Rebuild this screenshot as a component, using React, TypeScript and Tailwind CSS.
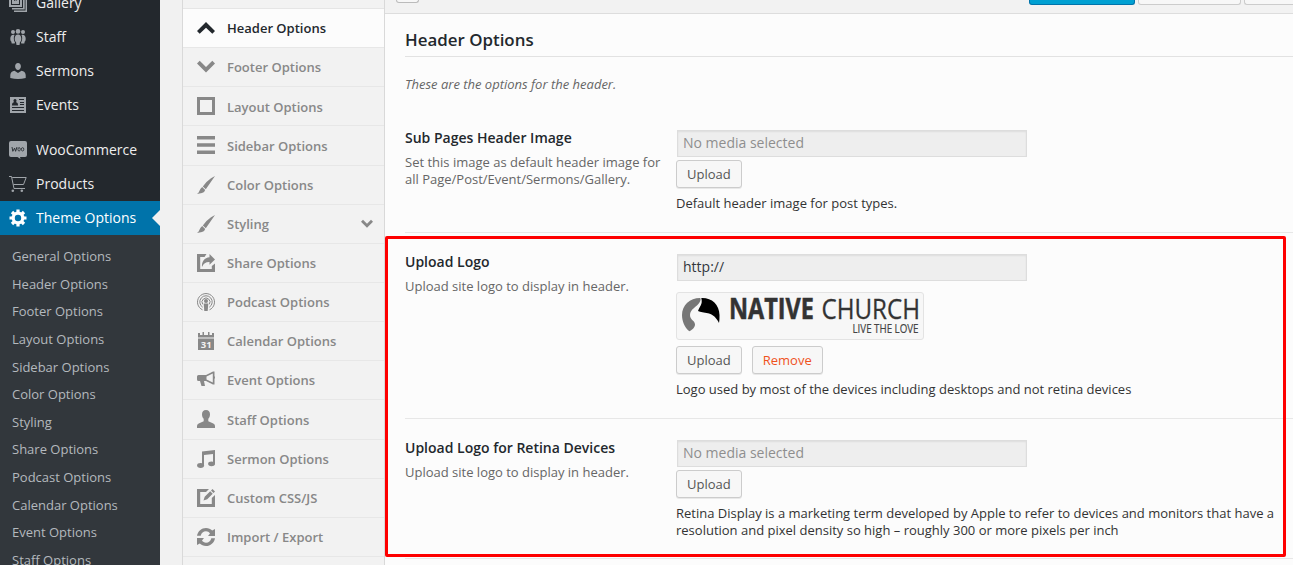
import type { ReactNode } from 'react';

const Icon = ({ children, className = 'size-[18px]' }: { children: ReactNode; className?: string }) => (
  <svg viewBox="0 0 18 18" fill="currentColor" className={`shrink-0 ${className}`}>
    {children}
  </svg>
);

const brush = <path d="M18 0 8.800 13.200 5.800 10.400Q10 5 14 2.300zM5.200 11 8.200 13.900Q7.500 16.200 5 17L0 18Q2 16.500 2.600 14.500T5.200 11z" />;

const adminIcons: Record<string, ReactNode> = {
  Gallery: (
    <path
      fillRule="evenodd"
      d="M0 0h13v13H0zM2 2v9h9V2zM3 3h7v7H3zM5 4v3l2-1 1 1V4zM14 2h1.700v13.600H3V14h11zM16.500 5H18v13H5v-1.400h11.500z"
    />
  ),
  Staff: (
    <>
      <circle cx="4" cy="4" r="2" />
      <circle cx="9" cy="3.400" r="2.300" />
      <circle cx="14" cy="4" r="2" />
      <path d="M9 6.500c2 0 3.300 1.500 3.300 4.200 0 2-.7 3-1.300 3.300L10.500 17h-3L7 14c-.6-.3-1.300-1.300-1.300-3.300C5.700 8 7 6.500 9 6.500zM4.800 6.700C3 6.400 1.300 7.600 1.300 10.500c0 2 .5 2.700 1 3l.4 2h3L6 14.600C4.500 12.600 4.500 9 5.500 7zM13.200 6.700c1.800-.3 3.500.9 3.500 3.800 0 2-.5 2.700-1 3l-.4 2h-3l-.3-.9c1.500-2 1.500-5.600.5-7.600z" />
    </>
  ),
  Sermons: (
    <path d="M9 1c1.800 0 2.900 1.300 2.900 3.200S10.700 8 9 8 6.100 6.100 6.100 4.200 7.200 1 9 1zM5.500 8.700 9 11l3.500-2.300c2.300.2 4.200 2 4.200 4.300V16q-7.700 2-15.400 0v-3c0-2.300 1.900-4.100 4.200-4.300z" />
  ),
  Events: (
    <path
      fillRule="evenodd"
      d="M1 1h16v16H1zM10 3v1h5V3zM11 6v1h4V6zM11 8v1h4V8zM3 11v1h12v-1zM3 14v1h12v-1zM6 3C4.800 3 4.300 4 4.500 5L5 6.200C3.500 6.500 3 7.200 3 9.500h6C9 7.200 8.500 6.500 7 6.200L7.500 5C7.700 4 7.200 3 6 3z"
    />
  ),
  WooCommerce: (
    <>
      <path d="M2 0h14q2 0 2 2v12q0 2-2 2h-5l.5 2-3-2H2q-2 0-2-2V2q0-2 2-2z" />
      <path d="m3 6 .8 4.300L5.600 7.100l1 3.200L8 6" fill="none" stroke="#23282d" strokeWidth="0.9" />
      <ellipse cx="10.100" cy="8.300" rx="1.200" ry="1.700" fill="none" stroke="#23282d" strokeWidth="0.8" />
      <ellipse cx="13.600" cy="8.300" rx="1.200" ry="1.700" fill="none" stroke="#23282d" strokeWidth="0.8" />
    </>
  ),
  Products: (
    <>
      <path d="M0 1.500h2.500L5 13.500h11M3.200 2.500h14L14.500 9.500H4.500" fill="none" stroke="currentColor" strokeWidth="1" />
      <circle cx="3.800" cy="15.800" r="1.300" />
      <circle cx="12.800" cy="15.800" r="1.300" />
    </>
  ),
  'Theme Options': (
    <>
      <circle cx="9" cy="9" r="4.800" fill="none" stroke="currentColor" strokeWidth="3.200" />
      <path
        d="M9 .5v3M9 14.500v3M.5 9h3M14.500 9h3M3 3l2 2M13 13l2 2M15 3l-2 2M5 13l-2 2"
        fill="none"
        stroke="currentColor"
        strokeWidth="3.200"
      />
    </>
  ),
};

const tabs: { label: string; icon: ReactNode; expandable?: boolean }[] = [
  { label: 'Header Options', icon: <path d="m0 12 9-9 9 9-2.700 2.700L9 8.700l-6.300 6z" /> },
  { label: 'Footer Options', icon: <path d="m0 5.500 2.700-2.700L9 8.900l6.300-6.100L18 5.500l-9 9z" /> },
  { label: 'Layout Options', icon: <path fillRule="evenodd" d="M0 0h18v18H0zM3 3v12h12V3z" /> },
  { label: 'Sidebar Options', icon: <path d="M0 0h18v3.500H0zM0 7.300h18v3.500H0zM0 14.500h18V18H0z" /> },
  { label: 'Color Options', icon: brush },
  { label: 'Styling', icon: brush, expandable: true },
  {
    label: 'Share Options',
    icon: (
      <path d="M0 0h9.500L7.500 3H3.200v12h11.600v-3l3.200-2.500V18H0zM12.500 0 18 5.500l-5.500 5.300V8C9 7.800 6.500 9.500 5 13 4.500 7.500 7.500 3.700 12.500 3.200z" />
    ),
  },
  {
    label: 'Podcast Options',
    icon: (
      <>
        <g fill="none" stroke="currentColor" strokeWidth="1">
          <path d="M5.500 16.800a8.500 8.500 0 1 1 7 0" />
          <path d="M5.700 14.200a6.200 6.200 0 1 1 6.600 0" />
          <path d="M5.700 11.300a4 4 0 1 1 6.600 0" />
        </g>
        <circle cx="9" cy="8" r="2" />
        <path d="M6.700 10.500h4.600L10.700 18H7.300z" />
      </>
    ),
  },
  {
    label: 'Calendar Options',
    icon: (
      <>
        <path d="M1 1h2v2h2.500V0H7v3h4V0h1.500v3H15V1h2v4.500H1zM1 6.500h16V18H1z" />
        <text x="9.200" y="15.900" textAnchor="middle" fill="#f2f2f2" className="font-['Open_Sans',sans-serif] text-[9.500px] font-bold">
          31
        </text>
      </>
    ),
  },
  {
    label: 'Event Options',
    icon: (
      <path
        fillRule="evenodd"
        d="M16 0.500h1.500v4.500q1 1.500 0 3V13.500H16l-7-3.500H7L8 15H4.500L3 10H1.500Q0 10 0 8.500V5.500q0-1.500 1.500-1.500H9zM15.800 2.500 9.500 5.500v3l6.300 3z"
      />
    ),
  },
  {
    label: 'Staff Options',
    icon: (
      <path d="M9 0c2.700 0 4 1.700 4 4.200 0 2-.7 3.600-1.700 4.600v2.400l5 2.200Q18 14.200 18 16v2H0v-2q0-1.800 1.700-2.600l5-2.200V8.800C5.700 7.800 5 6.200 5 4.200 5 1.700 6.300 0 9 0z" />
    ),
  },
  {
    label: 'Sermon Options',
    icon: (
      <>
        <path d="M5 1.500 18 0v14h-2V4L7 5v10.500H5z" />
        <ellipse cx="3.600" cy="15.500" rx="3.500" ry="2.400" />
        <ellipse cx="14.600" cy="13.800" rx="3.500" ry="2.400" />
      </>
    ),
  },
  {
    label: 'Custom CSS/JS',
    icon: <path d="M0 0h12l-3 3H3.200v12h11.600V9L18 6v12H0zM15.500 0 18 2.500 16.500 4 14 1.500zM13.200 2.300l2.500 2.500-5.500 5.500L6.500 11.500l1.200-3.700z" />,
  },
  {
    label: 'Import / Export',
    icon: (
      <path d="M0 7.800C.8 3.200 4.500 0 9 0c2.600 0 4.600.9 6.200 2.500L18 1v7h-7l2-2.500C12 4.200 10.700 3.300 9 3.300c-2.700 0-4.600 1.700-5.300 4.500zM18 10.200C17.200 14.800 13.500 18 9 18c-2.600 0-4.600-.9-6.200-2.500L0 17v-7h7l-2 2.500c1 1.300 2.300 2.200 4 2.200 2.700 0 4.600-1.700 5.300-4.500z" />
    ),
  },
];

const subItems = ['General Options', ...tabs.slice(0, 11).map((t) => t.label)];

const AdminItem = ({ label, active }: { label: string; active?: boolean }) => (
  <a
    className={`relative flex h-[34px] shrink-0 items-center pl-[9px] text-sm ${active ? 'bg-[#0073aa] text-white' : 'text-[#eee]'}`}
  >
    <Icon className={`size-[18px] ${active ? 'text-white' : 'text-[#a0a5aa]'}`}>{adminIcons[label]}</Icon>
    <span className="ml-[9px]">{label}</span>
    {active && <span className="absolute top-[9px] right-0 border-y-8 border-r-8 border-y-transparent border-r-[#f1f1f1]" />}
  </a>
);

const Button = ({ label, danger }: { label: string; danger?: boolean }) => (
  <button
    className={`h-7 rounded-[3px] border border-[#ccc] bg-[#f7f7f7] px-[10px] text-[13px] leading-[26px] shadow-[0_1px_0_rgba(0,0,0,0.08)] ${danger ? 'text-[#ef521d]' : 'text-[#555]'}`}
  >
    {label}
  </button>
);

const Logo = () => (
  <div className="mt-[11px] mb-1.5 h-12 w-[248px] rounded-[3px] border border-[#e3e3e3] bg-[#f7f7f7]">
    <svg viewBox="0 0 246 46" className="h-[46px] w-[246px] font-['Open_Sans',sans-serif]">
      <path
        d="M23 5C13 5 5 12 5 22c0 6 2.500 12.500 7.300 16.200 3-1.200 5.700-4 5.700-6.700 0-4-5-4.500-5-9.500 0-6 7-8 9.500-12.500 1.300-2.300 1.500-4 .5-4.500z"
        fill="#777"
      />
      <path
        d="M24.300 5c10-.5 18 6 18.200 17 0 3.500 0 5-.5 8-2.500-5.500-6-8.500-11-9.800-4-1-7.500-.7-10-2.200 1.500-4.500 5-6.500 3.300-13z"
        fill="#000"
      />
      <text
        x="52"
        y="26"
        textLength="85"
        lengthAdjust="spacingAndGlyphs"
        fill="#333"
        stroke="#333"
        strokeWidth="0.5"
        className="text-[28px] font-bold"
      >
        NATIVE
      </text>
      <text
        x="144.500"
        y="26"
        textLength="98.500"
        lengthAdjust="spacingAndGlyphs"
        fill="#333"
        stroke="#333"
        strokeWidth="0.3"
        className="text-[28px] font-normal"
      >
        CHURCH
      </text>
      <text
        x="175.500"
        y="40"
        textLength="66"
        lengthAdjust="spacingAndGlyphs"
        fill="#444"
        stroke="#444"
        strokeWidth="0.2"
        className="text-[12px]"
      >
        LIVE THE LOVE
      </text>
    </svg>
  </div>
);

const Field = ({
  title,
  description,
  value,
  placeholder,
  className,
  children,
}: {
  title: string;
  description: string;
  value?: string;
  placeholder?: string;
  className: string;
  children: ReactNode;
}) => (
  <section className={`flex shrink-0 border-b border-[#e7e7e7] pt-[21px] ${className}`}>
    <div className="w-[271px] shrink-0 pr-3">
      <h4 className="text-sm leading-4 font-semibold text-[#23282d]">{title}</h4>
      <p className="mt-2 text-[13px] leading-[17px] text-[#666]">{description}</p>
    </div>
    <div className="flex min-w-0 grow flex-col items-start pr-3 text-[13px] leading-[17px] text-[#333]">
      <input
        readOnly
        value={value}
        placeholder={placeholder}
        className="ml-px h-[27px] w-[350px] shrink-0 border border-[#ddd] bg-[#eee] px-[5px] pb-[2px] text-sm text-[#32373c] shadow-[inset_0_1px_2px_rgba(0,0,0,0.07)] placeholder:text-[#8e8e8e]"
      />
      {children}
    </div>
  </section>
);

export default function App() {
  return (
    <div className="flex h-[565px] w-full overflow-hidden bg-[#f1f1f1] font-['Open_Sans',sans-serif]">
      <nav className="flex w-40 shrink-0 flex-col overflow-hidden bg-[#23282d]">
        <div className="-mt-[14px] flex flex-col">
          {['Gallery', 'Staff', 'Sermons', 'Events'].map((l) => (
            <AdminItem key={l} label={l} />
          ))}
        </div>
        <div className="mt-[11px] flex flex-col">
          <AdminItem label="WooCommerce" />
          <AdminItem label="Products" />
          <AdminItem label="Theme Options" active />
        </div>
        <ul className="h-[400px] shrink-0 bg-[#32373c] pt-[8.200px] pl-3 text-[13px] text-[#b4b9be]">
          {subItems.map((l) => (
            <li key={l} className="h-[27.6px] leading-[27.6px]">
              {l}
            </li>
          ))}
        </ul>
      </nav>

      <aside className="ml-[22px] flex w-[203px] shrink-0 flex-col border-x border-[#d9d9d9] bg-[#f2f2f2] pt-2">
        <ul className="border-t border-[#e5e5e5]">
          {tabs.map((t, i) => (
            <li
              key={t.label}
              className={`flex h-[39.150px] items-center border-b border-[#e7e7e7] text-[13px] font-semibold ${i === 0 ? 'bg-[#fcfcfc] text-[#23282d]' : 'text-[#888]'}`}
            >
              <Icon className="ml-[14px] size-[18px]">{t.icon}</Icon>
              <span className="ml-3 pt-[1.800px]">{t.label}</span>
              {t.expandable && (
                <Icon className="mr-[11px] ml-auto size-3">
                  <path d="m0 5.500 3-3L9 8.500l6-6 3 3-9 9z" />
                </Icon>
              )}
            </li>
          ))}
        </ul>
      </aside>

      <main className="relative flex min-w-0 grow flex-col bg-[#fcfcfc]">
        <div className="flex h-[14px] shrink-0 items-start border-b border-[#ddd] bg-[#f2f2f2] pl-[11px]">
          <div className="h-[3px] w-[23px] rounded-b-[3px] border border-t-0 border-[#bbb] bg-[#f7f7f7]" />
          <div className="ml-auto flex gap-[3px]">
            <div className="h-[5px] w-[106px] rounded-b-[3px] border border-t-0 border-[#0073aa] bg-[#00a0d2]" />
            <div className="h-[5px] w-[103px] rounded-b-[3px] border border-t-0 border-[#ccc] bg-[#f7f7f7]" />
            <div className="h-[5px] w-[49px] rounded-bl-[3px] border-b border-l border-[#ccc] bg-[#f7f7f7]" />
          </div>
        </div>
        <div className="flex flex-col pl-5">
          <h3 className="h-[43px] border-b border-[#e2e2e2] pt-[14px] text-[16.900px] leading-6 font-semibold text-[#23282d]">
            Header Options
          </h3>
          <p className="mt-[17px] h-[35px] text-[13px] leading-5 text-[#666] italic">These are the options for the header.</p>
          <Field
            title="Sub Pages Header Image"
            description="Set this image as default header image for all Page/Post/Event/Sermons/Gallery."
            placeholder="No media selected"
            className="h-[124px]"
          >
            <div className="mt-[3px] flex">
              <Button label="Upload" />
            </div>
            <p className="mt-[7px]">Default header image for post types.</p>
          </Field>
          <Field title="Upload Logo" description="Upload site logo to display in header." value="http://" className="h-[186px]">
            <Logo />
            <div className="flex gap-[10px]">
              <Button label="Upload" />
              <Button label="Remove" danger />
            </div>
            <p className="mt-[7px]">Logo used by most of the devices including desktops and not retina devices</p>
          </Field>
          <Field
            title="Upload Logo for Retina Devices"
            description="Upload site logo to display in header."
            placeholder="No media selected"
            className="h-[140px]"
          >
            <div className="mt-[3px] flex">
              <Button label="Upload" />
            </div>
            <p className="mt-[7px]">
              Retina Display is a marketing term developed by Apple to refer to devices and monitors that have a resolution and pixel
              density so high – roughly 300 or more pixels per inch
            </p>
          </Field>
        </div>
        <div className="pointer-events-none absolute top-[236px] left-0 h-[321px] w-[901px] rounded-[2px] border-[3px] border-[#fe0000]" />
      </main>
    </div>
  );
}
